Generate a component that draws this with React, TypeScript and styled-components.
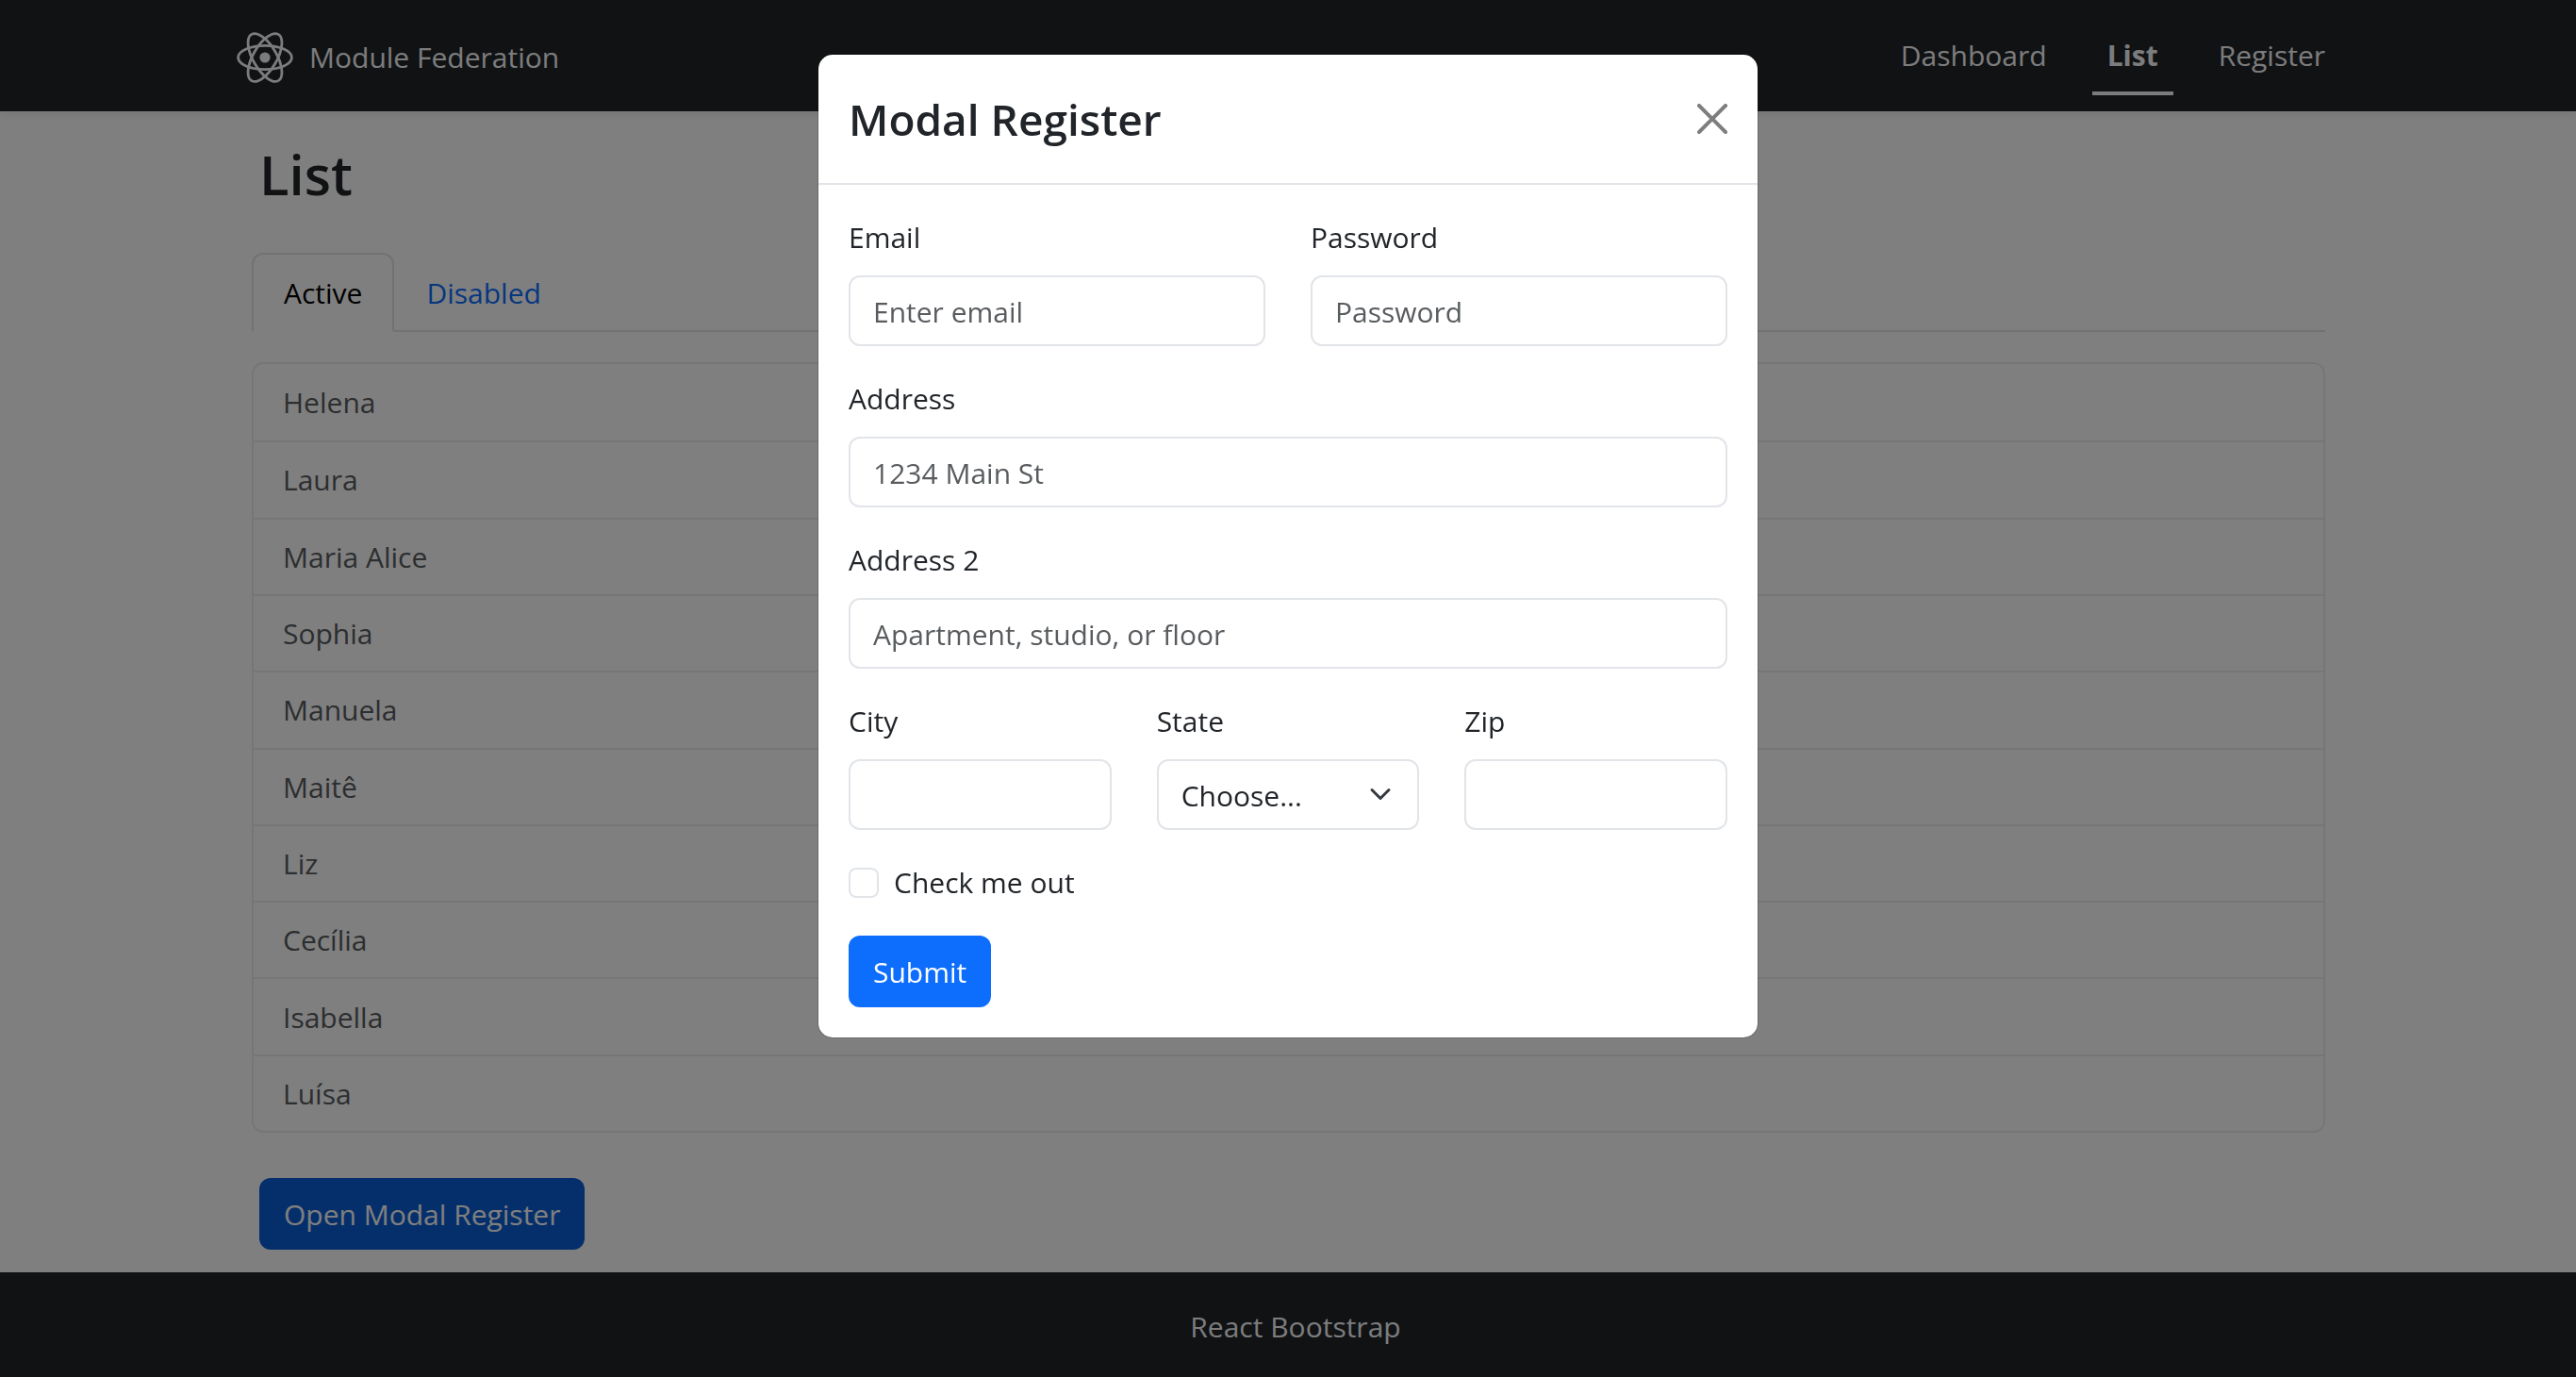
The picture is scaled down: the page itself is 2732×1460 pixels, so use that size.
import React from "react";
import styled, { createGlobalStyle } from "styled-components";

const text = "#212529";
const line = "#e1e4e8";
const faintLine = "#ebedef";
const primary = "#0d6efd";

const GlobalStyle = createGlobalStyle`
  *, *::before, *::after { box-sizing: border-box; }
  body {
    margin: 0;
    background: #fff;
    color: ${text};
    font-family: "Open Sans", "Noto Sans", sans-serif;
    font-size: 30px;
    line-height: 48px;
  }
  button, input, select { font: inherit; color: inherit; }
`;

const Page = styled.div`
  display: flex;
  flex-direction: column;
  min-height: 100vh;
`;

const Navbar = styled.header`
  background: #212529;
  color: #f8f9fa;
  box-shadow: 0 4px 8px rgba(0, 0, 0, 0.075);
`;

const Container = styled.div`
  width: 100%;
  max-width: 2280px;
  margin: 0 auto;
  padding: 0 24px;
`;

const NavContent = styled(Container)`
  display: flex;
  align-items: center;
  justify-content: space-between;
  height: 118px;
`;

const Brand = styled.a`
  display: flex;
  align-items: center;
  gap: 16px;
  padding-top: 4px;
  color: inherit;
  text-decoration: none;
`;

const NavLinks = styled.nav`
  display: flex;
  gap: 32px;
`;

const NavLink = styled.a<{ $current?: boolean }>`
  padding: 18px 16px 14px;
  border-bottom: 4px solid ${(p) => (p.$current ? "currentColor" : "transparent")};
  color: inherit;
  font-weight: ${(p) => (p.$current ? 700 : 400)};
  text-decoration: none;
`;

const Main = styled.main`
  flex: 1;
  display: flex;
`;

const MainContent = styled(Container)`
  display: flex;
  flex-direction: column;
  padding: 28px 40px 24px 41px;
`;

const Heading = styled.h2`
  margin: 0 8px 44px;
  font-size: 58px;
  font-weight: 600;
  line-height: 78px;
`;

const Tabs = styled.div`
  display: flex;
  margin-bottom: 32px;
  border-bottom: 2px solid ${line};
`;

const Tab = styled.button<{ $active?: boolean }>`
  margin-bottom: -2px;
  padding: 17px 32px 15px;
  border: 2px solid;
  border-color: ${(p) => (p.$active ? `${line} ${line} #fff` : "transparent")};
  border-radius: 12px 12px 0 0;
  background: ${(p) => (p.$active ? "#fff" : "transparent")};
  color: ${(p) => (p.$active ? "#000" : primary)};
`;

const NameList = styled.ul`
  flex: 1;
  display: grid;
  grid-auto-rows: 1fr;
  margin: 0 0 48px;
  padding: 0;
  border: 2px solid ${faintLine};
  border-radius: 12px;
  list-style: none;
`;

const NameItem = styled.li`
  display: flex;
  align-items: center;
  padding: 1px 31px 0;
  color: #585c5f;

  & + & { border-top: 2px solid ${faintLine}; }
`;

const Button = styled.button<{ $pressed?: boolean }>`
  align-self: flex-start;
  height: 76px;
  padding: 1px 26px 0;
  border: 0;
  border-radius: 12px;
  background: ${(p) => (p.$pressed ? "#0b5ed7" : primary)};
  color: #fff;
`;

const OpenButton = styled(Button)`
  margin: 0 8px;
`;

const Footer = styled.footer`
  display: flex;
  align-items: center;
  justify-content: center;
  height: 111px;
  padding: 4px 0 0 16px;
  background: #212529;
  color: #f8f9fa;
`;

const Backdrop = styled.div`
  position: fixed;
  inset: 0;
  display: flex;
  align-items: flex-start;
  justify-content: center;
  padding: 57px 16px;
  background: rgba(0, 0, 0, 0.5);
`;

const Dialog = styled.section`
  width: 100%;
  max-width: 998px;
  border: 1px solid rgba(0, 0, 0, 0.175);
  border-radius: 16px;
  background: #fff;
  background-clip: padding-box;
`;

const DialogHeader = styled.div`
  display: flex;
  align-items: center;
  justify-content: space-between;
  padding: 32px;
  border-bottom: 2px solid ${line};
`;

const DialogTitle = styled.h4`
  margin: 0;
  font-size: 46px;
  font-weight: 600;
  line-height: 72px;
`;

const CloseButton = styled.button`
  display: flex;
  padding: 0;
  border: 0;
  background: none;
  opacity: 0.5;
`;

const Form = styled.form`
  display: flex;
  flex-direction: column;
  gap: 32px;
  padding: 32px;
`;

const Row = styled.div`
  display: grid;
  grid-auto-flow: column;
  grid-auto-columns: 1fr;
  gap: 48px;
`;

const Field = styled.div`
  display: flex;
  flex-direction: column;
  gap: 16px;
  min-width: 0;
`;

const Input = styled.input`
  width: 100%;
  height: 75px;
  padding: 2px 24px 0;
  border: 2px solid ${line};
  border-radius: 12px;
  background: #fff;

  &::placeholder { color: #595c5f; opacity: 1; }
`;

const SelectBox = styled.div`
  position: relative;
  display: flex;

  svg {
    position: absolute;
    top: 25px;
    right: 29px;
    pointer-events: none;
  }
`;

const Select = styled.select`
  appearance: none;
  width: 100%;
  height: 75px;
  padding: 2px 72px 0 24px;
  border: 2px solid ${line};
  border-radius: 12px;
  background: #fff;
`;

const CheckRow = styled.div`
  display: flex;
  align-items: center;
  gap: 16px;
`;

const Checkbox = styled.input`
  appearance: none;
  width: 32px;
  height: 32px;
  margin: 0;
  border: 2px solid ${line};
  border-radius: 8px;
  background: #fff;

  &:checked { border-color: ${primary}; background: ${primary}; }
`;

const names = [
  "Helena", "Laura", "Maria Alice", "Sophia", "Manuela",
  "Maitê", "Liz", "Cecília", "Isabella", "Luísa",
];

function Logo() {
  return (
    <svg width="62" height="54" viewBox="-31 -27 62 54" fill="none" stroke="currentColor" strokeWidth="2.8" aria-hidden="true">
      {[0, 60, 120].map((angle) => (
        <ellipse key={angle} rx="28.4" ry="12.6" transform={`rotate(${angle})`} />
      ))}
      <circle r="5.6" fill="currentColor" stroke="none" />
    </svg>
  );
}

function TextField(props: { id: string; label: string; type?: string; placeholder?: string }) {
  return (
    <Field>
      <label htmlFor={props.id}>{props.label}</label>
      <Input id={props.id} type={props.type ?? "text"} placeholder={props.placeholder} />
    </Field>
  );
}

function RegisterDialog() {
  return (
    <Backdrop>
      <Dialog role="dialog" aria-modal="true" aria-labelledby="dialog-title">
        <DialogHeader>
          <DialogTitle id="dialog-title">Modal Register</DialogTitle>
          <CloseButton type="button" aria-label="Close">
            <svg width="32" height="32" viewBox="0 0 16 16" fill="#000" aria-hidden="true">
              <path d="M.293.293a1 1 0 0 1 1.414 0L8 6.586 14.293.293a1 1 0 1 1 1.414 1.414L9.414 8l6.293 6.293a1 1 0 0 1-1.414 1.414L8 9.414l-6.293 6.293a1 1 0 0 1-1.414-1.414L6.586 8 .293 1.707a1 1 0 0 1 0-1.414z" />
            </svg>
          </CloseButton>
        </DialogHeader>
        <Form onSubmit={(e) => e.preventDefault()}>
          <Row>
            <TextField id="email" label="Email" type="email" placeholder="Enter email" />
            <TextField id="password" label="Password" type="password" placeholder="Password" />
          </Row>
          <TextField id="address" label="Address" placeholder="1234 Main St" />
          <TextField id="address2" label="Address 2" placeholder="Apartment, studio, or floor" />
          <Row>
            <TextField id="city" label="City" />
            <Field>
              <label htmlFor="state">State</label>
              <SelectBox>
                <Select id="state" defaultValue="Choose...">
                  <option>Choose...</option>
                  <option>...</option>
                </Select>
                <svg width="24" height="24" viewBox="0 0 16 16" fill="none" aria-hidden="true">
                  <path d="m2 5 6 6 6-6" stroke="#343a40" strokeWidth="2" strokeLinecap="round" strokeLinejoin="round" />
                </svg>
              </SelectBox>
            </Field>
            <TextField id="zip" label="Zip" />
          </Row>
          <CheckRow>
            <Checkbox id="check" type="checkbox" />
            <label htmlFor="check">Check me out</label>
          </CheckRow>
          <Button type="submit">Submit</Button>
        </Form>
      </Dialog>
    </Backdrop>
  );
}

export default function App() {
  return (
    <>
      <GlobalStyle />
      <Page>
        <Navbar>
          <NavContent>
            <Brand href="#">
              <Logo />
              Module Federation
            </Brand>
            <NavLinks>
              <NavLink href="#dashboard">Dashboard</NavLink>
              <NavLink href="#list" $current>List</NavLink>
              <NavLink href="#register">Register</NavLink>
            </NavLinks>
          </NavContent>
        </Navbar>
        <Main>
          <MainContent>
            <Heading>List</Heading>
            <Tabs role="tablist">
              <Tab type="button" role="tab" aria-selected="true" $active>Active</Tab>
              <Tab type="button" role="tab" aria-selected="false">Disabled</Tab>
            </Tabs>
            <NameList>
              {names.map((name) => (
                <NameItem key={name}>{name}</NameItem>
              ))}
            </NameList>
            <OpenButton type="button" $pressed>Open Modal Register</OpenButton>
          </MainContent>
        </Main>
        <Footer>React Bootstrap</Footer>
      </Page>
      <RegisterDialog />
    </>
  );
}
